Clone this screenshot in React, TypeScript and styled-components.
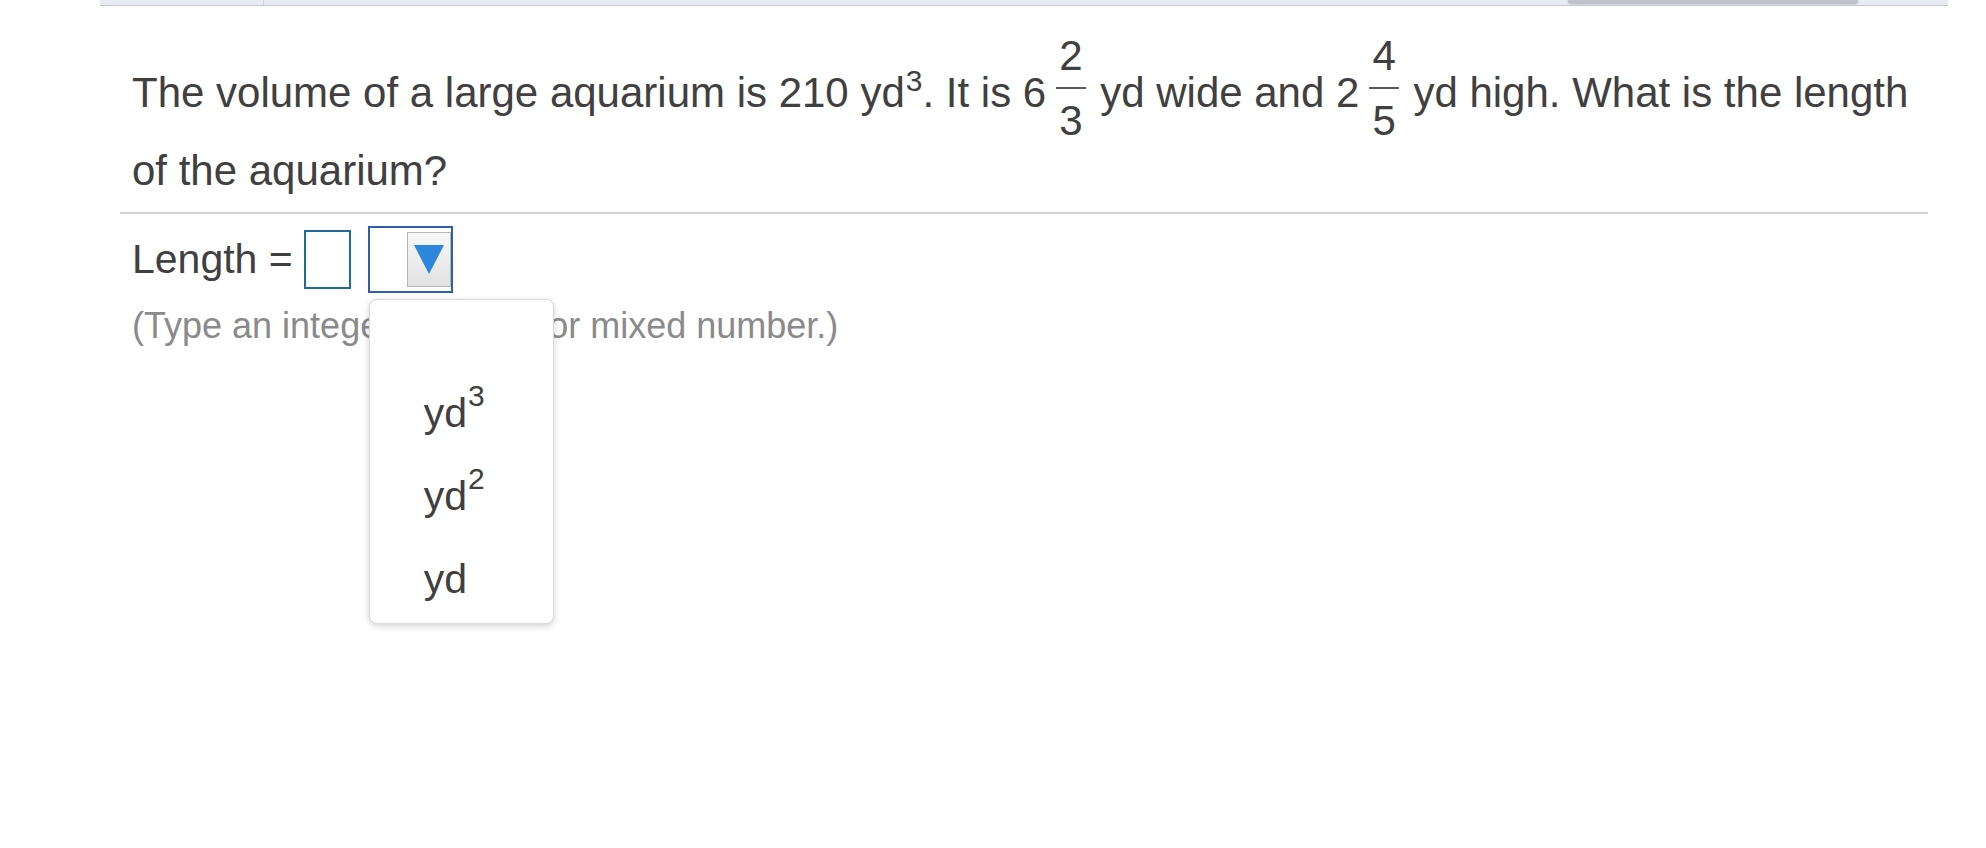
import React from 'react';
import styled, { createGlobalStyle } from 'styled-components';

const GlobalStyle = createGlobalStyle`
  html, body {
    margin: 0;
    padding: 0;
    background: #ffffff;
  }
  body {
    font-family: 'Liberation Sans', Arial, Helvetica, sans-serif;
    color: #404040;
  }
`;

const Page = styled.div`
  width: 1986px;
  height: 848px;
  overflow: hidden;
`;

const TopBar = styled.div`
  display: flex;
  align-items: flex-start;
  margin: 0 38px 0 100px;
  height: 5px;
  background: #e8ebf1;
  border-bottom: 1px solid #c5c9d2;
`;

const BarDivider = styled.div`
  width: 1px;
  height: 5px;
  margin-left: 163px;
  background: #cfd3da;
`;

const BarSpacer = styled.div`
  flex: 1;
`;

const BarButton = styled.div`
  width: 290px;
  height: 3px;
  margin-right: 90px;
  background: #c0c3c9;
  border-radius: 0 0 4px 4px;
  box-shadow: 0 1px 2px rgba(0, 0, 0, 0.25);
`;

const Content = styled.div`
  margin-left: 120px;
  width: 1808px;
`;

const Question = styled.p`
  margin: 30px 0 0;
  padding-left: 12px;
  font-size: 42px;
  line-height: 60px;
  color: #404040;
`;

const Sup = styled.sup<{ raise: number }>`
  font-size: 30px;
  line-height: 0;
  margin-left: 1px;
  vertical-align: ${(props) => props.raise}px;
`;

const Fraction = styled.span`
  display: inline-flex;
  flex-direction: column;
  align-items: stretch;
  vertical-align: 37px;
  margin: 0 3px 0 10px;
  line-height: 40px;
`;

const FracPart = styled.span`
  display: block;
  text-align: center;
  padding: 0 3px;
`;

const FracBar = styled.span`
  display: block;
  height: 2px;
  margin: 11px 0 12px;
  background: #5a5a5a;
`;

const Rule = styled.div`
  height: 2px;
  margin-top: 11px;
  background: #d3d3d3;
`;

const AnswerRow = styled.div`
  display: flex;
  align-items: center;
  margin-top: 12px;
  padding-left: 12px;
  font-size: 41px;
  color: #404040;
`;

const Label = styled.span`
  white-space: pre;
`;

const AnswerInput = styled.div`
  box-sizing: border-box;
  width: 47px;
  height: 59px;
  margin-left: 11px;
  border: 2px solid #1f6c97;
  background: #fff;
`;

const SelectWrap = styled.div`
  position: relative;
  margin-left: 17px;
`;

const SelectBox = styled.div`
  box-sizing: border-box;
  display: flex;
  justify-content: flex-end;
  align-items: flex-start;
  width: 85px;
  height: 67px;
  padding-top: 4px;
  border: 2px solid #2c5fa6;
  background: #fff;
`;

const ArrowButton = styled.div`
  box-sizing: border-box;
  display: flex;
  align-items: center;
  justify-content: center;
  width: 44px;
  height: 55px;
  border: 1px solid #b7b7b7;
  background: linear-gradient(#f8f8f8, #e2e2e2);
`;

const Menu = styled.ul`
  position: absolute;
  top: calc(100% + 6px);
  left: 1px;
  z-index: 2;
  box-sizing: border-box;
  width: 185px;
  margin: 0;
  padding: 0 0 2px;
  list-style: none;
  background: #fff;
  border: 1px solid #dadada;
  border-radius: 8px;
  box-shadow: 0 2px 7px rgba(0, 0, 0, 0.18);
`;

const MenuItem = styled.li<{ blank?: boolean }>`
  height: ${(props) => (props.blank ? '72px' : '83px')};
  line-height: 83px;
  padding-left: 54px;
  font-size: 41px;
  color: #404040;
`;

const Hint = styled.p`
  margin: 12px 0 0;
  padding-left: 12px;
  font-size: 36px;
  color: #8a8a8a;
`;

const DownTriangle = () => (
  <svg width="30" height="29" viewBox="0 0 30 29">
    <path d="M0 0 H30 L15 29 Z" fill="#2b86dc" />
  </svg>
);

const units = [
  { base: 'yd', power: '3' },
  { base: 'yd', power: '2' },
  { base: 'yd', power: '' },
];

export default function App() {
  return (
    <Page>
      <GlobalStyle />
      <TopBar>
        <BarDivider />
        <BarSpacer />
        <BarButton />
      </TopBar>
      <Content>
        <Question>
          The volume of a large aquarium is 210 yd<Sup raise={16}>3</Sup>. It is 6
          <Fraction>
            <FracPart>2</FracPart>
            <FracBar />
            <FracPart>3</FracPart>
          </Fraction>{' '}
          yd wide and 2
          <Fraction>
            <FracPart>4</FracPart>
            <FracBar />
            <FracPart>5</FracPart>
          </Fraction>{' '}
          yd high. What is the length of the aquarium?
        </Question>
        <Rule />
        <AnswerRow>
          <Label>Length =</Label>
          <AnswerInput />
          <SelectWrap>
            <SelectBox>
              <ArrowButton>
                <DownTriangle />
              </ArrowButton>
            </SelectBox>
            <Menu>
              <MenuItem blank />
              {units.map((u) => (
                <MenuItem key={u.base + u.power}>
                  {u.base}
                  {u.power && <Sup raise={21}>{u.power}</Sup>}
                </MenuItem>
              ))}
            </Menu>
          </SelectWrap>
        </AnswerRow>
        <Hint>(Type an integer, fraction, or mixed number.)</Hint>
      </Content>
    </Page>
  );
}
